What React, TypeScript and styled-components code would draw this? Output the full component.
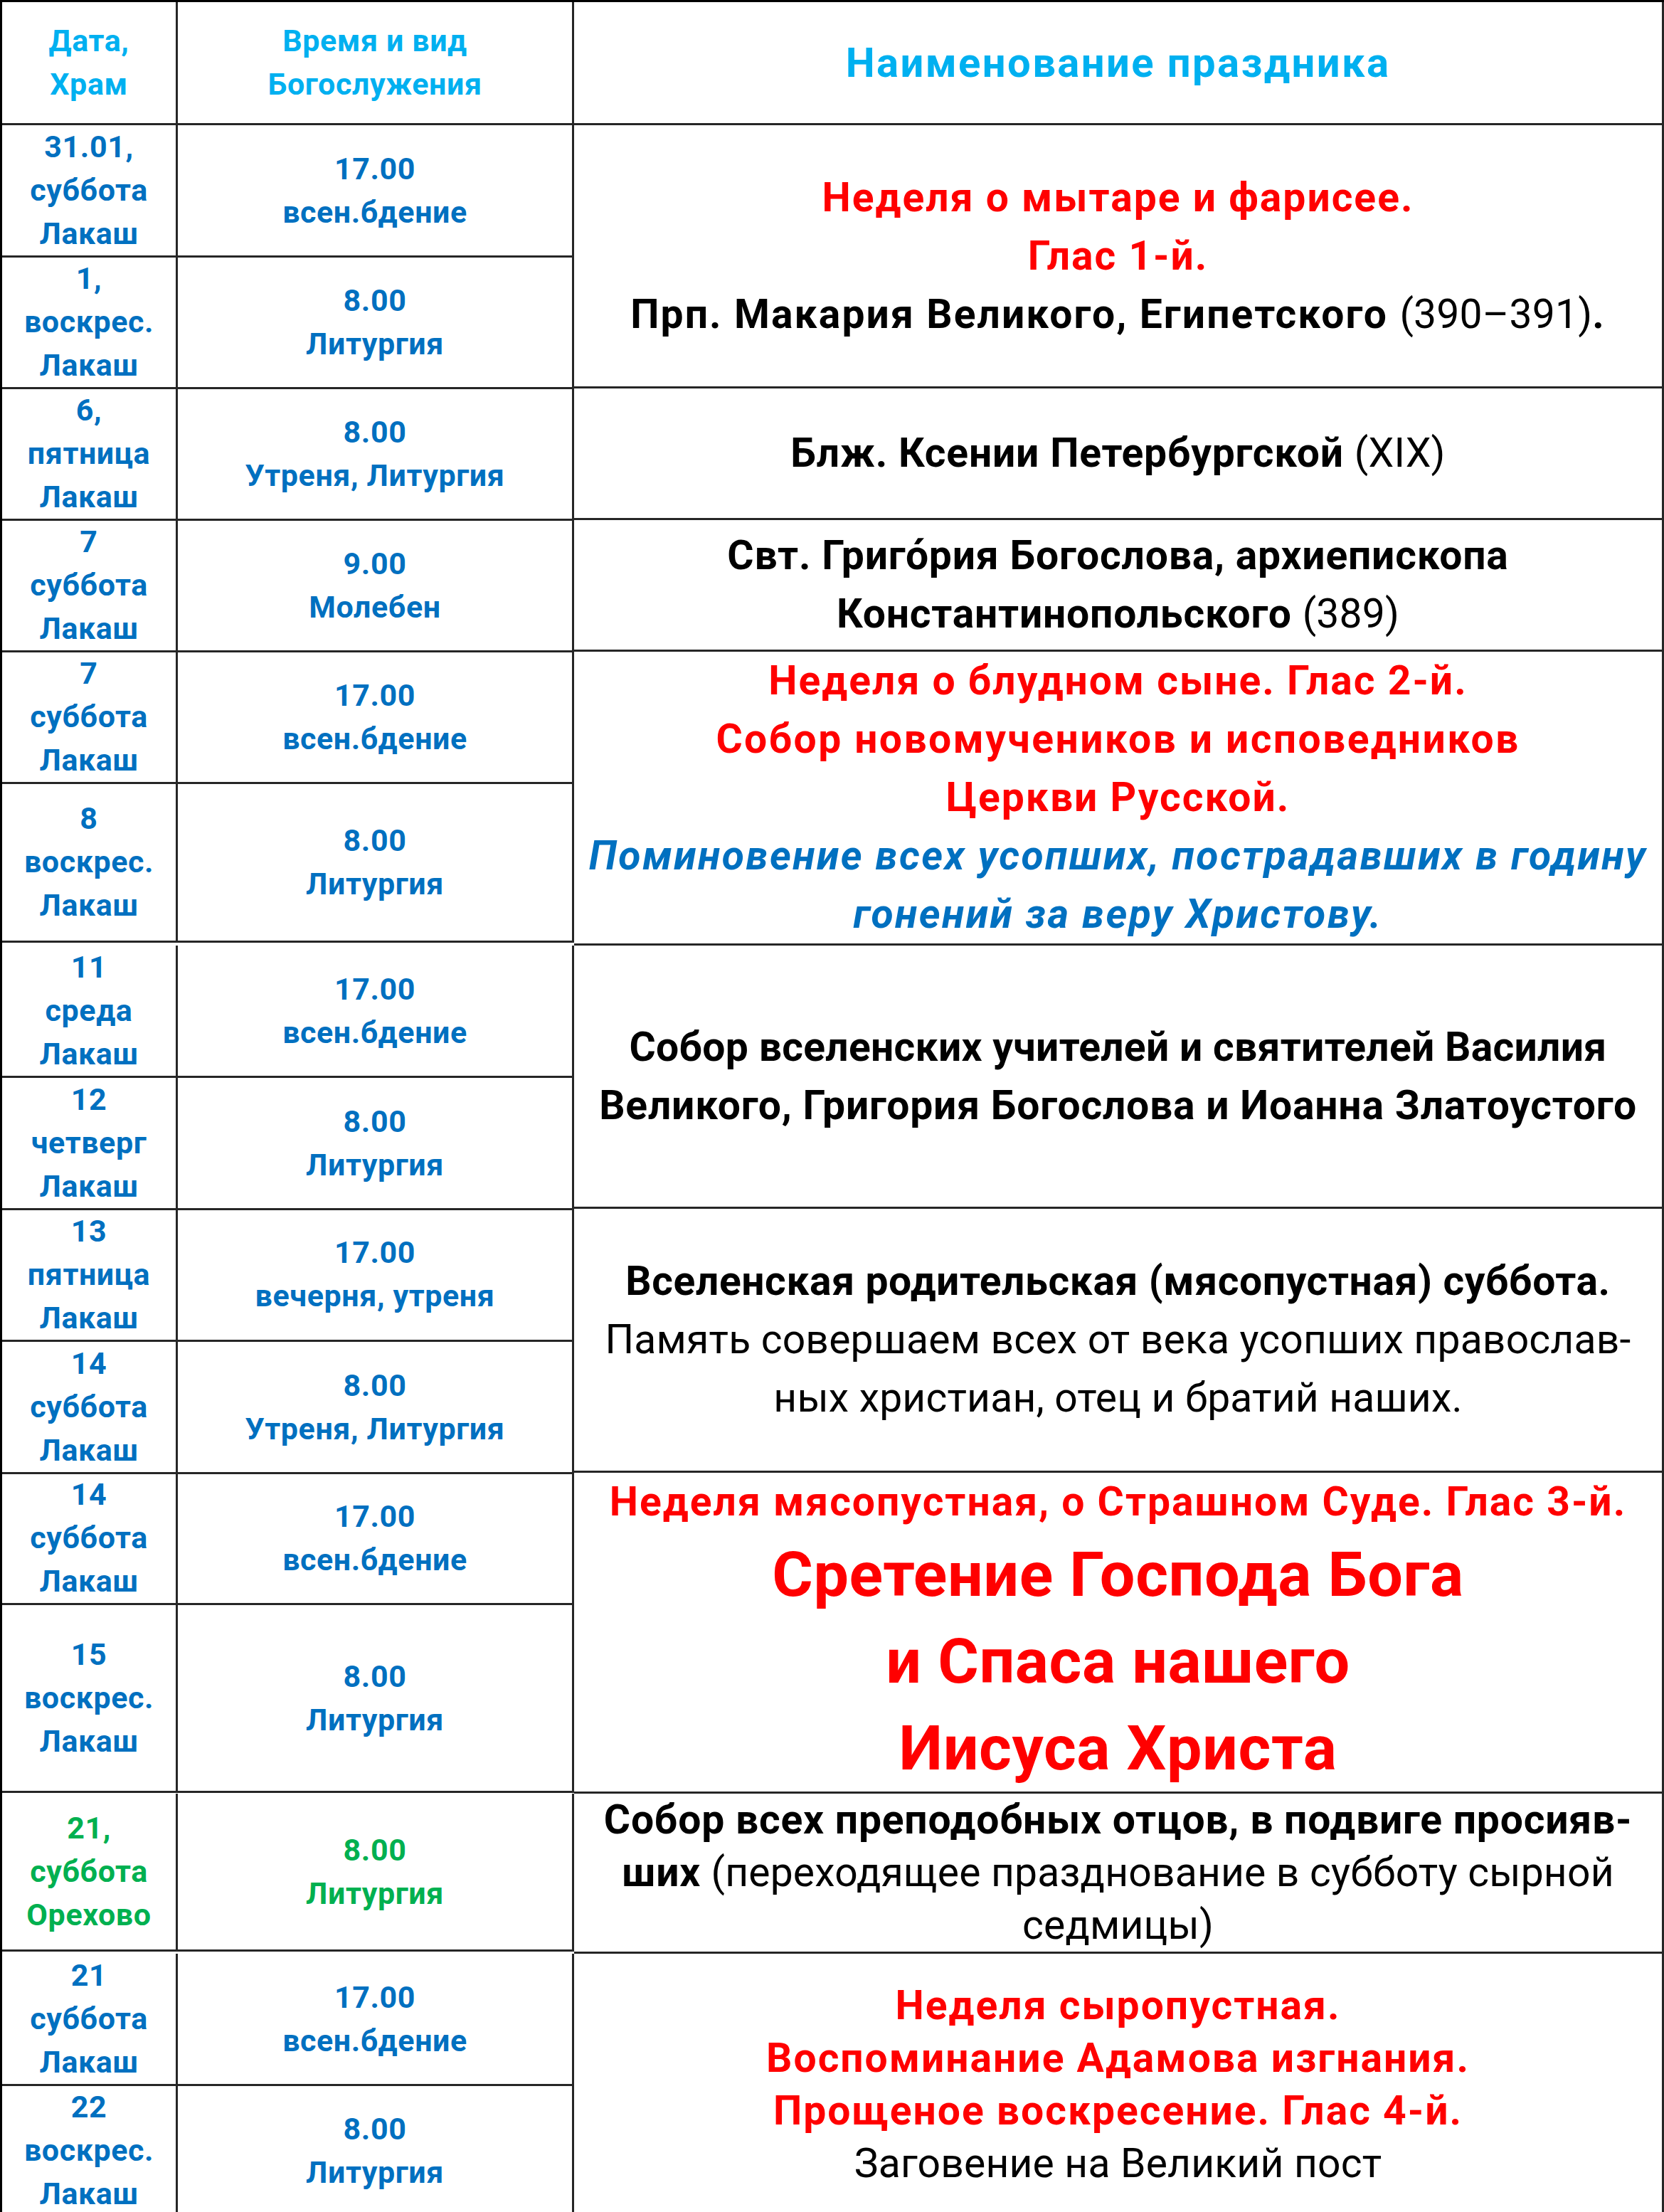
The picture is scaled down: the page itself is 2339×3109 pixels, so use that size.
import React from "react";
import styled, { createGlobalStyle, css } from "styled-components";

const GlobalStyle = createGlobalStyle`
  html, body { margin: 0; padding: 0; background: #ffffff; }
  body { font-family: Roboto, "Noto Sans", "DejaVu Sans", sans-serif; }
`;

type Tone = "red" | "black" | "blue" | "green" | "cyan";

const COLORS: Record<Tone, string> = {
  red: "#ff0000",
  black: "#000000",
  blue: "#0070c0",
  green: "#00b050",
  cyan: "#00b0f0",
};

const TRACKING: Record<Tone, number> = {
  red: 2,
  black: 0.8,
  blue: 2.4,
  green: 0.6,
  cyan: 2.4,
};

const LINE = "3px solid #262626";

const cellBase = css`
  box-sizing: border-box;
  border-right: ${LINE};
  border-bottom: ${LINE};
  display: flex;
  flex-direction: column;
  align-items: center;
  justify-content: center;
  text-align: center;
  overflow: visible;
`;

const Sheet = styled.div`
  width: 2339px;
  box-sizing: border-box;
  border-top: 3px solid #000;
  border-left: 3px solid #000;
  font-family: Roboto, "Noto Sans", "DejaVu Sans", sans-serif;
`;

const HeaderRow = styled.div`
  display: grid;
  grid-template-columns: 247px 557px 1fr;
  height: 173px;
`;

const HeadCell = styled.div<{ $wide?: boolean }>`
  ${cellBase};
  color: ${COLORS.cyan};
  font-weight: 700;
  font-size: ${(p) => (p.$wide ? 58 : 43)}px;
  letter-spacing: ${(p) => (p.$wide ? 2.4 : 0.6)}px;
  line-height: 61px;
`;

const Group = styled.div`
  display: grid;
  grid-template-columns: 804px 1fr;
`;

const Services = styled.div`
  display: flex;
  flex-direction: column;
`;

const ServiceRow = styled.div<{ $h: number }>`
  display: grid;
  grid-template-columns: 247px 557px;
  height: ${(p) => p.$h}px;
`;

const SmallCell = styled.div<{ $tone: Tone }>`
  ${cellBase};
  color: ${(p) => COLORS[p.$tone]};
  font-weight: 700;
  font-size: 43px;
  line-height: 61px;
  letter-spacing: 0.6px;
  white-space: nowrap;
`;

const FeastCell = styled.div<{ $lh: number }>`
  ${cellBase};
  font-size: 57px;
  font-weight: 700;
  line-height: ${(p) => p.$lh}px;
  padding: 0 8px;
`;

const FeastLine = styled.div<{ $tone: Tone; $big?: boolean; $italic?: boolean; $track?: number }>`
  white-space: nowrap;
  color: ${(p) => COLORS[p.$tone]};
  font-style: ${(p) => (p.$italic ? "italic" : "normal")};
  letter-spacing: ${(p) => p.$track ?? TRACKING[p.$tone]}px;
  ${(p) =>
    p.$big &&
    css`
      font-size: 88px;
      line-height: 122px;
      letter-spacing: 0.6px;
    `}
`;

const Light = styled.span`
  font-weight: 400;
  letter-spacing: 0.2px;
`;

type Seg = { t: string; light?: boolean };
type Line = { segs: Seg[]; tone?: Tone; big?: boolean; italic?: boolean; track?: number };
type Service = { h: number; date: string[]; time: string[]; tone?: Tone };
type FeastGroup = { services: Service[]; lh: number; lines: Line[] };

const L = (text: string, extra: Partial<Line> = {}): Line => ({ segs: [{ t: text }], ...extra });

const GROUPS: FeastGroup[] = [
  {
    services: [
      { h: 185, date: ["31.01,", "суббота", "Лакаш"], time: ["17.00", "всен.бдение"] },
      { h: 185, date: ["1,", "воскрес.", "Лакаш"], time: ["8.00", "Литургия"] },
    ],
    lh: 82,
    lines: [
      L("Неделя о мытаре и фарисее.", { tone: "red" }),
      L("Глас 1-й.", { tone: "red" }),
      {
        track: 2.1,
        segs: [
          { t: "Прп. Макария Великого, Египетского " },
          { t: "(390–391)", light: true },
          { t: "." },
        ],
      },
    ],
  },
  {
    services: [{ h: 185, date: ["6,", "пятница", "Лакаш"], time: ["8.00", "Утреня, Литургия"] }],
    lh: 82,
    lines: [{ segs: [{ t: "Блж. Ксении Петербургской " }, { t: "(XIX)", light: true }] }],
  },
  {
    services: [{ h: 185, date: ["7", "суббота", "Лакаш"], time: ["9.00", "Молебен"] }],
    lh: 82,
    lines: [
      L("Свт. Григо\u0301рия Богослова, архиепископа"),
      { segs: [{ t: "Константинопольского " }, { t: "(389)", light: true }] },
    ],
  },
  {
    services: [
      { h: 185, date: ["7", "суббота", "Лакаш"], time: ["17.00", "всен.бдение"] },
      { h: 224, date: ["8", "воскрес.", "Лакаш"], time: ["8.00", "Литургия"] },
    ],
    lh: 82,
    lines: [
      L("Неделя о блудном сыне. Глас 2-й.", { tone: "red" }),
      L("Собор новомучеников и исповедников", { tone: "red", track: 2.4 }),
      L("Церкви Русской.", { tone: "red" }),
      L("Поминовение всех усопших, пострадавших в годину", { tone: "blue", italic: true }),
      L("гонений за веру Христову.", { tone: "blue", italic: true }),
    ],
  },
  {
    services: [
      { h: 186, date: ["11", "среда", "Лакаш"], time: ["17.00", "всен.бдение"] },
      { h: 184, date: ["12", "четверг", "Лакаш"], time: ["8.00", "Литургия"] },
    ],
    lh: 82,
    lines: [
      L("Собор вселенских учителей и святителей Василия", { track: 0.3 }),
      L("Великого, Григория Богослова и Иоанна Златоустого"),
    ],
  },
  {
    services: [
      { h: 187, date: ["13", "пятница", "Лакаш"], time: ["17.00", "вечерня, утреня"] },
      { h: 184, date: ["14", "суббота", "Лакаш"], time: ["8.00", "Утреня, Литургия"] },
    ],
    lh: 82,
    lines: [
      L("Вселенская родительская (мясопустная) суббота.", { track: 0.6 }),
      { segs: [{ t: "Память совершаем всех от века усопших православ-", light: true }] },
      { segs: [{ t: "ных христиан, отец и братий наших.", light: true }] },
    ],
  },
  {
    services: [
      { h: 186, date: ["14", "суббота", "Лакаш"], time: ["17.00", "всен.бдение"] },
      { h: 264, date: ["15", "воскрес.", "Лакаш"], time: ["8.00", "Литургия"] },
    ],
    lh: 82,
    lines: [
      L("Неделя мясопустная, о Страшном Суде. Глас 3-й.", { tone: "red" }),
      L("Сретение Господа Бога", { tone: "red", big: true }),
      L("и Спаса нашего", { tone: "red", big: true }),
      L("Иисуса Христа", { tone: "red", big: true }),
    ],
  },
  {
    services: [
      { h: 222, date: ["21,", "суббота", "Орехово"], time: ["8.00", "Литургия"], tone: "green" },
    ],
    lh: 74,
    lines: [
      L("Собор всех преподобных отцов, в подвиге просияв-"),
      { segs: [{ t: "ших" }, { t: " (переходящее празднование в субботу сырной", light: true }] },
      { segs: [{ t: "седмицы)", light: true }] },
    ],
  },
  {
    services: [
      { h: 185, date: ["21", "суббота", "Лакаш"], time: ["17.00", "всен.бдение"] },
      { h: 185, date: ["22", "воскрес.", "Лакаш"], time: ["8.00", "Литургия"] },
    ],
    lh: 74,
    lines: [
      L("Неделя сыропустная.", { tone: "red" }),
      L("Воспоминание Адамова изгнания.", { tone: "red" }),
      L("Прощеное воскресение. Глас 4-й.", { tone: "red" }),
      { segs: [{ t: "Заговение на Великий пост", light: true }] },
    ],
  },
];

function ServiceRowView({ s }: { s: Service }) {
  const tone = s.tone ?? "blue";
  return (
    <ServiceRow $h={s.h}>
      <SmallCell $tone={tone}>
        {s.date.map((d, i) => (
          <div key={i}>{d}</div>
        ))}
      </SmallCell>
      <SmallCell $tone={tone}>
        {s.time.map((d, i) => (
          <div key={i}>{d}</div>
        ))}
      </SmallCell>
    </ServiceRow>
  );
}

export default function App() {
  return (
    <>
      <GlobalStyle />
      <Sheet>
        <HeaderRow>
          <HeadCell>
            <div>Дата,</div>
            <div>Храм</div>
          </HeadCell>
          <HeadCell>
            <div>Время и вид</div>
            <div>Богослужения</div>
          </HeadCell>
          <HeadCell $wide>Наименование праздника</HeadCell>
        </HeaderRow>
        {GROUPS.map((g, gi) => (
          <Group key={gi}>
            <Services>
              {g.services.map((s, si) => (
                <ServiceRowView key={si} s={s} />
              ))}
            </Services>
            <FeastCell $lh={g.lh}>
              {g.lines.map((ln, li) => (
                <FeastLine
                  key={li}
                  $tone={ln.tone ?? "black"}
                  $big={ln.big}
                  $italic={ln.italic}
                  $track={ln.track}
                >
                  {ln.segs.map((sg, k) =>
                    sg.light ? <Light key={k}>{sg.t}</Light> : <React.Fragment key={k}>{sg.t}</React.Fragment>
                  )}
                </FeastLine>
              ))}
            </FeastCell>
          </Group>
        ))}
      </Sheet>
    </>
  );
}
